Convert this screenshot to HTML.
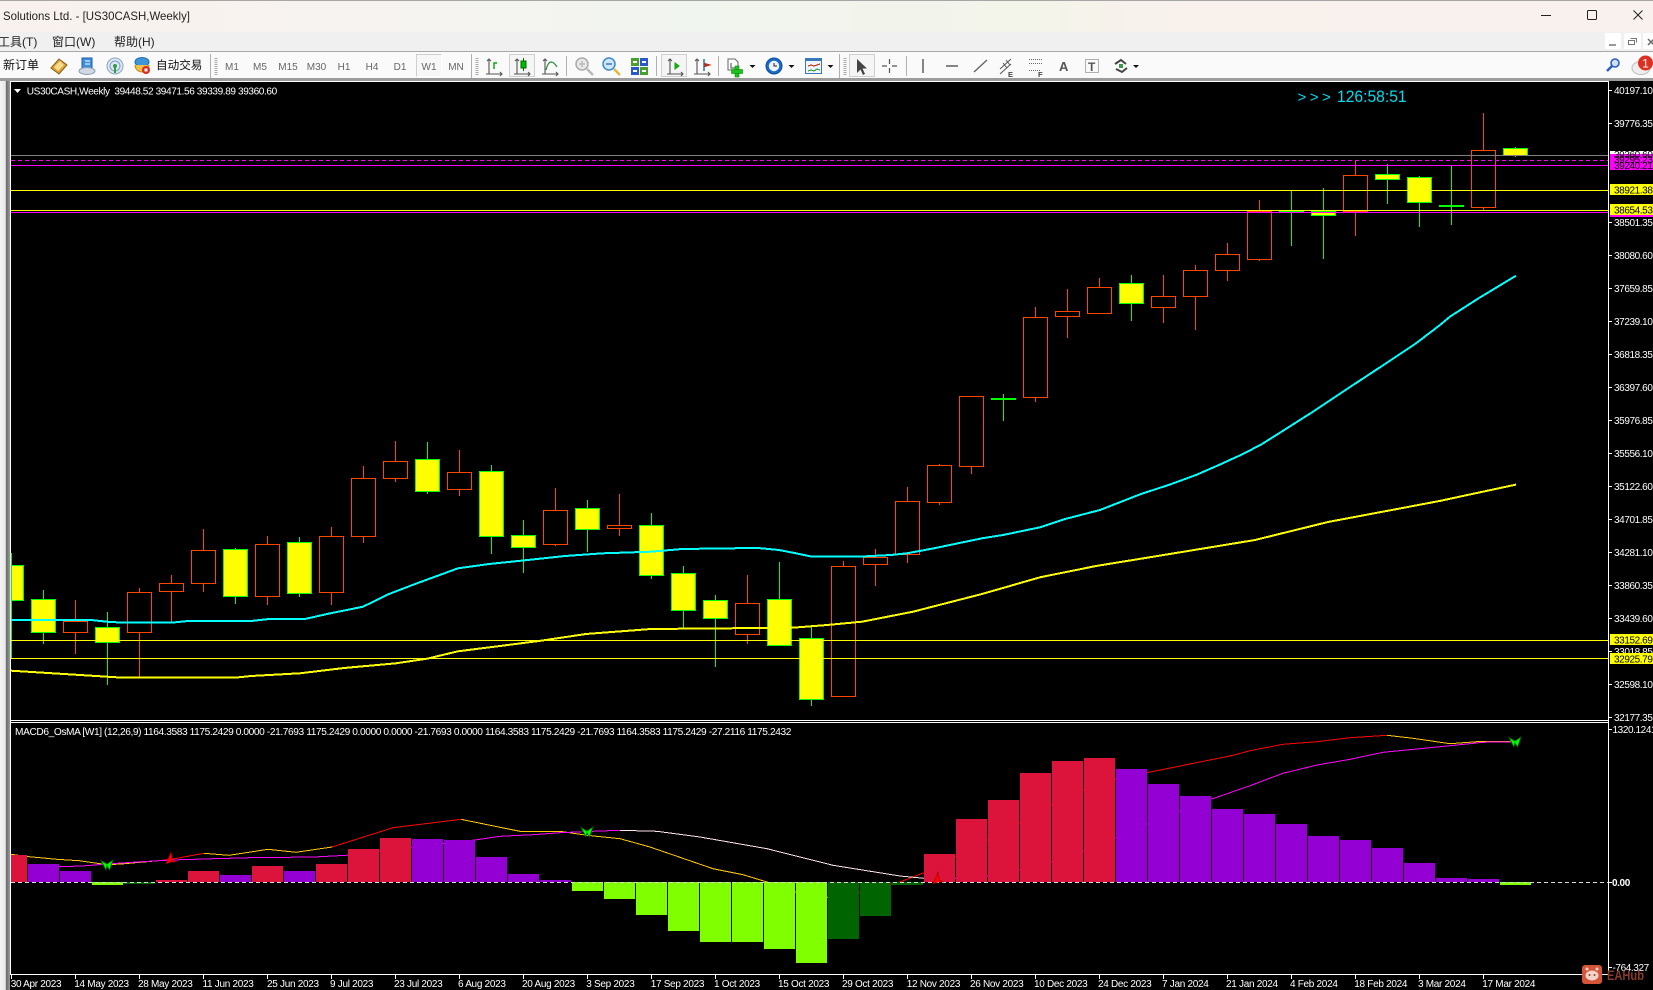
<!DOCTYPE html>
<html><head><meta charset="utf-8"><title>US30CASH,Weekly</title>
<style>
html,body{margin:0;padding:0;background:#000;width:1653px;height:990px;overflow:hidden}
svg{display:block}
text{font-family:"Liberation Sans","Noto Sans CJK SC",sans-serif;white-space:pre}
.a{font-size:10px;letter-spacing:-.4px;fill:#fff}
.k{font-size:10px;letter-spacing:-.4px;fill:#000}
.d{font-size:10px;letter-spacing:-.3px;fill:#fff}
.tf{font-size:10px;fill:#666}
.m{font-size:12px;fill:#222}
.c{shape-rendering:crispEdges}
</style></head><body>
<svg xmlns="http://www.w3.org/2000/svg" width="1653" height="990" viewBox="0 0 1653 990">
<defs>
<linearGradient id="tb" x1="0" x2="1" y1="0" y2="0">
<stop offset="0" stop-color="#f9f1ee"/><stop offset=".2" stop-color="#f7f3f0"/><stop offset=".42" stop-color="#f1f5ef"/><stop offset=".62" stop-color="#f3f4ea"/><stop offset=".72" stop-color="#f9f1ec"/><stop offset="1" stop-color="#f9f1ee"/>
</linearGradient>
<linearGradient id="ls" x1="0" x2="1" y1="0" y2="0"><stop offset="0" stop-color="#f4f4f4"/><stop offset=".55" stop-color="#e8e8e8"/><stop offset=".62" stop-color="#6a6a6a"/><stop offset="1" stop-color="#9a9a9a"/></linearGradient>
<path id="ax" d="M-5-7V8M-8 8H8M-7-5l2-2 2 2M6 6l2 2-2 2" fill="none" stroke="#555" stroke-width="1.100"/>
<path id="ag" d="M-6-4.500L0-1 6-5 2.500 5 0 1-1 5Z" fill="#0f0" stroke="#060" stroke-width=".8"/>
<path id="ar" d="M-5 5L0-7 1.500 1 6 3 0 3Z" fill="#f00" stroke="#900" stroke-width=".6"/>
</defs>

<!-- window chrome -->
<rect width="1653" height="990" fill="#000"/>
<rect width="1653" height="32" fill="url(#tb)"/>
<rect width="1653" height="1" fill="#a6a6a6"/>
<text x="3" y="20" font-size="12" fill="#222" textLength="187" lengthAdjust="spacingAndGlyphs">Solutions Ltd. - [US30CASH,Weekly]</text>
<rect x="1541" y="15" width="10" height="1" fill="#222"/>
<rect x="1587.500" y="10.500" width="9" height="9" rx="1" fill="none" stroke="#222" stroke-width="1"/>
<path d="M1633.500 10.500l9 9m0-9l-9 9" stroke="#222" stroke-width="1" fill="none"/>

<rect y="32" width="1653" height="20" fill="#f0f0f0"/>
<text x="-2" y="46" class="m">工具(T)</text>
<text x="52" y="46" class="m">窗口(W)</text>
<text x="114" y="46" class="m">帮助(H)</text>
<rect x="1605" y="33" width="16" height="16" rx="1" fill="#fff"/><rect x="1609" y="44" width="7" height="2" fill="#999"/>
<rect x="1624" y="33" width="17" height="16" rx="1" fill="#fff"/><path d="M1630.500 38.500h6v4M1628.500 40.500h6v4h-6z" fill="none" stroke="#777"/>
<rect x="1643" y="33" width="12" height="16" rx="1" fill="#fff"/><path d="M1648 39l6 6m0-6l-6 6" stroke="#666" stroke-width="1.500"/>
<rect y="51" width="1653" height="1" fill="#a8a8a8"/>
<rect y="52" width="1653" height="26" fill="#fafafa"/>
<rect y="78" width="1653" height="3" fill="#9c9c9c"/>

<!-- toolbar left -->
<text x="3" y="69" font-size="12" fill="#111">新订单</text>
<g transform="translate(59,66)"><path d="M-8 2L0-7 8-1 0 8Z" fill="#d9a53a" stroke="#8a5c10"/><path d="M-5 1L1-5 5-1-1 5Z" fill="#f6dc8a"/></g>
<g transform="translate(87,66)"><rect x="-5" y="-8" width="10" height="11" fill="#3f8fe0" stroke="#1c5ea8"/><path d="M-2-5h5M-2-2h5" stroke="#fff"/><ellipse cx="0" cy="5" rx="8" ry="3.500" fill="#cfd8e4" stroke="#8a9ab0"/></g>
<g transform="translate(115,66)"><circle r="8" fill="#dfe8f0" stroke="#8aa4c0"/><circle r="5" fill="none" stroke="#7aa0c8"/><circle r="2" fill="#3a9a4a"/><path d="M0 1V7" stroke="#3a9a4a" stroke-width="2"/></g>
<g transform="translate(142,65)"><ellipse cx="0" cy="-3" rx="7" ry="4.500" fill="#3f95d8" stroke="#1d6ba8"/><path d="M-7 0a7 7 0 0 0 14 0" fill="#efc04a" stroke="#b88a20"/><circle cx="4" cy="5" r="4" fill="#e02a18"/><rect x="2.500" y="3.500" width="3" height="3" fill="#fff"/></g>
<text x="156" y="69" font-size="11.600" fill="#111">自动交易</text>
<rect x="210" y="54" width="1" height="24" fill="#b0b0b0"/>
<path d="M216 58V75" stroke="#aaa" stroke-width="3" stroke-dasharray="1 1"/>
<rect x="416.500" y="54.500" width="25" height="22" fill="#f7f7f7" stroke="#cfcfcf"/>
<path d="M441.500 54.500v22h-25" fill="none" stroke="#fff"/>
<g text-anchor="middle">
<text x="232" y="70" class="tf">M1</text><text x="260" y="70" class="tf">M5</text><text x="288" y="70" class="tf">M15</text><text x="316.500" y="70" class="tf">M30</text><text x="344" y="70" class="tf">H1</text><text x="372" y="70" class="tf">H4</text><text x="400" y="70" class="tf">D1</text><text x="429" y="70" class="tf">W1</text><text x="456" y="70" class="tf">MN</text>
</g>
<rect x="471" y="54" width="1" height="24" fill="#b0b0b0"/>
<path d="M477 58V75" stroke="#aaa" stroke-width="3" stroke-dasharray="1 1"/>
<use href="#ax" x="494" y="66"/><path d="M494 69V63h3" fill="none" stroke="#0a0" stroke-width="1.400"/>
<rect x="509.500" y="54.500" width="25" height="22" fill="#f5f5f5" stroke="#cfcfcf"/>
<use href="#ax" x="522" y="66"/><path d="M523.500 58V71" stroke="#060"/><rect x="521" y="61" width="5" height="7" fill="#0b0" stroke="#060"/>
<use href="#ax" x="550" y="66"/><path d="M546 70q2-8 5-8t6 5" fill="none" stroke="#2a8a3a" stroke-width="1.200"/>
<rect x="566" y="56" width="1" height="20" fill="#b0b0b0"/>
<g transform="translate(582,64)"><circle r="6" fill="#e8e8e8" stroke="#aaa" stroke-width="1.500"/><path d="M-3 0h6M0-3v6" stroke="#bbb" stroke-width="1.500"/><path d="M5 5l6 6" stroke="#b8b8b8" stroke-width="2.500"/></g>
<g transform="translate(609,64)"><circle r="6" fill="#cfe6f8" stroke="#3a8ac8" stroke-width="1.500"/><path d="M-3 0h6" stroke="#3a7ab8" stroke-width="1.500"/><path d="M5 5l6 6" stroke="#e0b840" stroke-width="2.500"/></g>
<g class="c"><rect x="631" y="58" width="8" height="8" fill="#4aa02c"/><rect x="640" y="58" width="8" height="8" fill="#2a5ac8"/><rect x="631" y="67" width="8" height="8" fill="#2a5ac8"/><rect x="640" y="67" width="8" height="8" fill="#4aa02c"/><path d="M633 62h4M642 62h4M633 71h4M642 71h4" stroke="#fff" stroke-width="2"/></g>
<rect x="656" y="56" width="1" height="20" fill="#b0b0b0"/>
<rect x="661.500" y="54.500" width="25" height="22" fill="#f5f5f5" stroke="#cfcfcf"/>
<use href="#ax" x="675" y="66"/><path d="M675 63l4 3-4 3Z" fill="#2a2" stroke="#0a0"/>
<use href="#ax" x="702" y="66"/><path d="M704 59V71" stroke="#1a6aa8" stroke-width="1.400"/><path d="M710 65l-5-1.500v3Z" fill="#c02a10" stroke="#c02a10"/>
<rect x="718" y="56" width="1" height="20" fill="#b0b0b0"/>
<g transform="translate(734,66)"><path d="M-6-7H1l3 3V4H-6Z" fill="#fff" stroke="#666"/><path d="M-3-3v5h5" fill="none" stroke="#444"/><rect x="1" y="0" width="4" height="11" fill="#1cc21c" stroke="#0a8a0a" stroke-width=".6"/><rect x="-2.500" y="3.500" width="11" height="4" fill="#1cc21c" stroke="#0a8a0a" stroke-width=".6"/></g>
<path d="M749.500 69h6l-3 3Z" fill="#111" transform="translate(0,-4)"/>
<g transform="translate(774,66)"><circle r="8" fill="#1a6cc8" stroke="#0e4c98"/><circle r="5.200" fill="#eef4fa"/><path d="M0-3V0H3" stroke="#222" fill="none"/></g>
<path d="M788.500 65h6l-3 3Z" fill="#111"/>
<g class="c" transform="translate(805,58)"><rect x=".500" y=".500" width="16" height="15" fill="#eef4fa" stroke="#3a78b8"/><rect x="1" y="1" width="15" height="2" fill="#3a78b8"/><path d="M3 8l3-1 3 1 3-1 3-1" stroke="#c02a10" fill="none"/><path d="M3 13l3-1 3 1 3-2 3 1" stroke="#2a9a3a" fill="none"/></g>
<path d="M827.500 65h6l-3 3Z" fill="#111"/>
<rect x="839" y="54" width="1" height="24" fill="#b0b0b0"/>
<path d="M845 58V75" stroke="#aaa" stroke-width="3" stroke-dasharray="1 1"/>
<rect x="849.500" y="54.500" width="25" height="22" fill="#f5f5f5" stroke="#cfcfcf"/>
<path d="M857 59V73L860.500 69.500 863 75 865 74 862.500 68.500H867Z" fill="#444"/>
<path d="M889.500 59v5m0 4v5M882 66h5m5 0h5" stroke="#555" stroke-width="1.200" fill="none"/>
<rect x="906" y="56" width="1" height="20" fill="#b0b0b0"/>
<path d="M923 59V73" stroke="#555" stroke-width="1.400"/>
<path d="M946 66H958" stroke="#555" stroke-width="1.400"/>
<path d="M974 72L987 60" stroke="#666" stroke-width="1.400"/>
<g stroke="#555" fill="none"><path d="M1000 69l11-10M1000 74l11-10M1003 63l4 5M1006 60l4 5"/></g><text x="1008" y="77" font-size="7.500" font-weight="bold" fill="#444">E</text>
<path d="M1029 59.500h13M1029 63.500h13M1029 70.500h11" stroke="#666" stroke-dasharray="1 1"/><text x="1038" y="77" font-size="7.500" font-weight="bold" fill="#444">F</text>
<text x="1059" y="71" font-size="13" font-weight="bold" fill="#555">A</text>
<rect x="1085.500" y="59.500" width="13" height="13" fill="none" stroke="#666" stroke-dasharray="1 1"/><text x="1088" y="71" font-size="12" font-weight="bold" fill="#555">T</text>
<g transform="translate(1121,66)"><path d="M-6-2L0-6 5-2M-5 3L1 6 6 2" fill="none" stroke="#444" stroke-width="2"/><rect x="-2" y="-2" width="4" height="4" fill="#3a9a4a"/></g>
<path d="M1133 65h6l-3 3Z" fill="#111"/>
<g transform="translate(1613,65)"><circle cx="2" cy="-2" r="4" fill="#cfe0f5" stroke="#2a5ec0" stroke-width="1.600"/><path d="M-1 1l-5 5" stroke="#2a5ec0" stroke-width="2.500"/></g>
<ellipse cx="1641" cy="68" rx="9" ry="6.500" fill="#eee" stroke="#bbb"/>
<circle cx="1645.500" cy="63" r="7.500" fill="#de3020"/><text x="1645.500" y="67.500" font-size="12" fill="#fff" text-anchor="middle">1</text>

<!-- left strip -->
<rect x="0" y="81" width="10" height="909" fill="url(#ls)"/>

<!-- chart frame -->
<g class="c" fill="#fff">
<rect x="10" y="81" width="1599" height="1"/>
<rect x="10" y="81" width="1" height="894"/>
<rect x="1608" y="81" width="1" height="894"/>
<rect x="10" y="720" width="1599" height="1"/>
<rect x="10" y="722" width="1599" height="1"/>
<rect x="10" y="974" width="1599" height="1"/>
</g>

<!-- wicks -->
<g class="c" fill="none" stroke-width="1">
<path stroke="#ff4500" d="M75.500 600V654M139.500 588V678M171.500 575V622M203.500 529V592M267.500 536V605M331.500 527V605M363.500 466V543M395.500 441V482M459.500 450V496M555.500 488V546M619.500 494V536M747.500 575V644M843.500 561V696M875.500 549V586M907.500 487V563M939.500 464V505M971.500 396V474M1035.500 307V402M1067.500 289V338M1099.500 278V314M1163.500 275V323M1195.500 265V330M1227.500 243V281M1259.500 200V261M1355.500 160V236M1483.500 113V210"/>
<path stroke="#0f0" d="M11.500 553V658M43.500 590V644M107.500 612V685M235.500 548V604M299.500 537V597M427.500 442V494M491.500 465V554M523.500 520V573M587.500 500V552M651.500 513V579M683.500 566V629M715.500 595V667M779.500 562V645M811.500 627V706M1003.500 394V421M1131.500 275V321M1291.500 191V246M1323.500 188V259M1387.500 164V204M1419.500 176V227M1451.500 166V225M1515.500 147V157"/>
</g>
<!-- bear bodies (yellow) -->
<g class="c" fill="#ff0" stroke="#0f0" stroke-width="1">
<rect x="11.500" y="565.500" width="12" height="35"/>
<rect x="31.500" y="599.500" width="24" height="33"/>
<rect x="95.500" y="627.500" width="24" height="15"/>
<rect x="223.500" y="549.500" width="24" height="47"/>
<rect x="287.500" y="542.500" width="24" height="51"/>
<rect x="415.500" y="459.500" width="24" height="32"/>
<rect x="479.500" y="471.500" width="24" height="65"/>
<rect x="511.500" y="535.500" width="24" height="12"/>
<rect x="575.500" y="508.500" width="24" height="21"/>
<rect x="639.500" y="525.500" width="24" height="50"/>
<rect x="671.500" y="573.500" width="24" height="37"/>
<rect x="703.500" y="600.500" width="24" height="18"/>
<rect x="767.500" y="599.500" width="24" height="46"/>
<rect x="799.500" y="638.500" width="24" height="61"/>
<rect x="1119.500" y="283.500" width="24" height="20"/>
<rect x="1311.500" y="211.500" width="24" height="4"/>
<rect x="1375.500" y="174.500" width="24" height="5"/>
<rect x="1407.500" y="177.500" width="24" height="25"/>
<rect x="1503.500" y="148.500" width="24" height="7"/>
</g>
<g class="c" fill="#0f0"><rect x="991" y="398" width="25" height="2"/><rect x="1279" y="210" width="25" height="2"/><rect x="1439" y="205" width="25" height="2"/></g>
<!-- bull bodies (black) -->
<g class="c" fill="#000" stroke="#ff4500" stroke-width="1">
<rect x="63.500" y="621.500" width="24" height="11"/>
<rect x="127.500" y="592.500" width="24" height="40"/>
<rect x="159.500" y="583.500" width="24" height="8"/>
<rect x="191.500" y="550.500" width="24" height="33"/>
<rect x="255.500" y="544.500" width="24" height="52"/>
<rect x="319.500" y="536.500" width="24" height="56"/>
<rect x="351.500" y="478.500" width="24" height="58"/>
<rect x="383.500" y="461.500" width="24" height="17"/>
<rect x="447.500" y="472.500" width="24" height="17"/>
<rect x="543.500" y="510.500" width="24" height="34"/>
<rect x="607.500" y="525.500" width="24" height="3"/>
<rect x="735.500" y="603.500" width="24" height="31"/>
<rect x="831.500" y="566.500" width="24" height="130"/>
<rect x="863.500" y="557.500" width="24" height="7"/>
<rect x="895.500" y="501.500" width="24" height="53"/>
<rect x="927.500" y="465.500" width="24" height="37"/>
<rect x="959.500" y="396.500" width="24" height="70"/>
<rect x="1023.500" y="317.500" width="24" height="80"/>
<rect x="1055.500" y="311.500" width="24" height="5"/>
<rect x="1087.500" y="287.500" width="24" height="26"/>
<rect x="1151.500" y="296.500" width="24" height="11"/>
<rect x="1183.500" y="270.500" width="24" height="26"/>
<rect x="1215.500" y="254.500" width="24" height="16"/>
<rect x="1247.500" y="211.500" width="24" height="48"/>
<rect x="1343.500" y="175.500" width="24" height="36"/>
<rect x="1471.500" y="150.500" width="24" height="57"/>
</g>

<!-- horizontal lines -->
<g class="c" fill="none" stroke-width="1">
<path stroke="#808080" d="M11 155.500H1608"/>
<path stroke="#f0f" stroke-dasharray="4 3" d="M11 160.500H1608"/>
<path stroke="#f0f" d="M11 165.500H1608"/>
<path stroke="#ff0" d="M11 190.500H1608"/>
<path stroke="#ff0" d="M11 210.500H1608"/>
<path stroke="#f0f" d="M11 212.500H1608"/>
<path stroke="#ff0" d="M11 640.500H1608"/>
<path stroke="#ff0" d="M11 658.500H1608"/>
</g>

<!-- moving averages -->
<polyline class="c" fill="none" stroke="#0ff" stroke-width="2" points="11,620 91,620 107,621.700 123,622.700 171,622.700 188,621 251,621 269,619 305,619 327,614 363,606.700 389,594 417,583.300 458,568.300 489,564 523,560.500 565,556 603,553.300 651,551.700 682,549 731,548.300 758,548 779,550 796,553.300 812,556.700 858,556.700 891,555 907,553.300 934,548.300 982,538.300 1003,535 1040,527.300 1064,519.300 1100,510 1141,494 1170,484.500 1196,475 1220,464.500 1244,453.500 1262,444 1279,433.300 1313,411.700 1348,388.300 1382,366 1416,343.300 1440,325 1450,316.600 1480,297.400 1516,275.700"/>
<polyline class="c" fill="none" stroke="#ff0" stroke-width="2" points="11,670.700 27,671.700 59,673.700 91,675.700 107,676.700 123,677.700 235,677.700 251,676 300,673.300 344,668 396,663.300 427,658.700 458,651.300 500,646 541,640.700 586,634 651,629 793,627.700 827,625 862,621.700 913,611.700 982,594 1040,577.300 1096,566 1160,555.600 1255,540 1328,522 1413,506 1440,500.900 1516,484.600"/>

<!-- chart labels -->
<path d="M14 89h7l-3.500 4Z" fill="#fff"/>
<text x="26.800" y="94.500" class="a" textLength="250" lengthAdjust="spacingAndGlyphs">US30CASH,Weekly  39448.52 39471.56 39339.89 39360.60</text>
<text x="1297.500" y="102" font-size="15" fill="#00dcf0">&gt;</text>
<text x="1309.800" y="102" font-size="15" fill="#00dcf0">&gt;</text>
<text x="1322" y="102" font-size="15" fill="#00dcf0">&gt;</text>
<text x="1337" y="102" font-size="17" fill="#00dcf0" textLength="69.600" lengthAdjust="spacingAndGlyphs">126:58:51</text>

<!-- right axis -->
<path class="c" stroke="#fff" d="M1609 90.500h3M1609 123.500h3M1609 222.500h3M1609 255.500h3M1609 288.500h3M1609 321.500h3M1609 354.500h3M1609 387.500h3M1609 420.500h3M1609 453.500h3M1609 486.500h3M1609 519.500h3M1609 552.500h3M1609 585.500h3M1609 618.500h3M1609 651.500h3M1609 684.500h3M1609 717.500h3M1609 729.500h3M1609 882.500h3M1609 967.500h3"/>
<g>
<text x="1614" y="94" class="a">40197.10</text>
<text x="1614" y="127" class="a">39776.35</text>
<text x="1614" y="226" class="a">38501.35</text>
<text x="1614" y="259" class="a">38080.60</text>
<text x="1614" y="292" class="a">37659.85</text>
<text x="1614" y="325" class="a">37239.10</text>
<text x="1614" y="358" class="a">36818.35</text>
<text x="1614" y="391" class="a">36397.60</text>
<text x="1614" y="424" class="a">35976.85</text>
<text x="1614" y="457" class="a">35556.10</text>
<text x="1614" y="490" class="a">35122.60</text>
<text x="1614" y="523" class="a">34701.85</text>
<text x="1614" y="556" class="a">34281.10</text>
<text x="1614" y="589" class="a">33860.35</text>
<text x="1614" y="622" class="a">33439.60</text>
<text x="1614" y="655" class="a">33018.85</text>
<text x="1614" y="688" class="a">32598.10</text>
<text x="1614" y="721" class="a">32177.35</text>
</g>
<g class="c">
<rect x="1610" y="151" width="43" height="11" fill="#fff"/>
<rect x="1610" y="160" width="43" height="10" fill="#f0f"/>
<rect x="1610" y="154" width="43" height="11" fill="#f0f"/>
<rect x="1610" y="184" width="43" height="11" fill="#ff0"/>
<rect x="1610" y="215" width="43" height="2" fill="#f0f"/>
<rect x="1610" y="204" width="43" height="11" fill="#ff0"/>
<rect x="1610" y="634" width="43" height="11" fill="#ff0"/>
<rect x="1610" y="653" width="43" height="11" fill="#ff0"/>
</g>
<text x="1614" y="158" class="k">39360.60</text>
<text x="1614" y="169" class="k">39240.21</text>
<text x="1614" y="163" class="k">39295.23</text>
<text x="1614" y="193.500" class="k">38921.38</text>
<text x="1614" y="213.500" class="k">38654.53</text>
<text x="1614" y="643.500" class="k">33152.69</text>
<text x="1614" y="662.500" class="k">32925.79</text>

<!-- MACD lines -->
<g fill="none" stroke-width="1" class="c">
<polyline stroke="#ffc800" points="11,854.300 29,856.700 57,859.300 79,860.700 107,864.700 121,864 155,861"/>
<polyline stroke="#f00" points="155,861 171,859.300 204,853.300"/>
<polyline stroke="#ffc800" points="204,853.300 229,855.300 268,849.300 296,852.300 332,847"/>
<polyline stroke="#f00" points="332,847 393,827.700 461,819.300"/>
<polyline stroke="#ffc800" points="461,819.300 500,827.300 520,831.300 560,831.300 587,835.300 620,838.700 650,847 713,868.700 743,874.700 767,882 795,892 828,897.300"/>
<polyline stroke="#f00" points="828,897.300 860,892.300 900,882 924,872.700 956,856 987,840.300 1019,823 1051,805.300 1083,790.300 1115,779.300 1147,772.700 1233,755.300 1250,750.700 1283,744.300 1317,741.700 1350,737.700 1387,735.300"/>
<polyline stroke="#ffc800" points="1387,735.300 1413,738.300 1450,743.700 1477,741.700 1515,741.300"/>
<polyline stroke="#f0f" points="28,868 59,866.700 82,866 107,864 132,862.300 171,860 214,858.700 250,857.700 314,857 346,855.300 411,847.300 475,840 500,836.300 533,834.700 560,832.700 600,831 620,830.300"/>
<polyline stroke="#ffe4e8" points="620,830.300 657,831.300 700,837 767,848.700 833,865.300 900,876 924,878.300 955,878.300"/>
<polyline stroke="#f0f" points="955,878.300 987,876.300 1019,870.300 1051,862.300 1083,851.300 1115,838.300 1147,824.300 1179,811.300 1211,799.300 1250,785.700 1283,773.300 1317,765 1350,759.300 1383,752.300 1417,749 1450,745.700 1483,742.300 1515,741.700"/>
</g>

<!-- histogram -->
<g class="c" fill="#dc143c">
<rect x="11" y="855" width="16" height="27"/><rect x="156" y="880" width="31" height="2"/><rect x="188" y="871" width="31" height="11"/><rect x="252" y="866" width="31" height="16"/><rect x="316" y="864" width="31" height="18"/><rect x="348" y="849" width="31" height="33"/><rect x="380" y="838" width="31" height="44"/><rect x="924" y="854" width="31" height="28"/><rect x="956" y="819" width="31" height="63"/><rect x="988" y="800" width="31" height="82"/><rect x="1020" y="773" width="31" height="109"/><rect x="1052" y="761" width="31" height="121"/><rect x="1084" y="758" width="31" height="124"/>
</g>
<g class="c" fill="#9400d3">
<rect x="28" y="864" width="31" height="18"/><rect x="60" y="871" width="31" height="11"/><rect x="220" y="875" width="31" height="7"/><rect x="284" y="871" width="31" height="11"/><rect x="412" y="839" width="31" height="43"/><rect x="444" y="840" width="31" height="42"/><rect x="476" y="857" width="31" height="25"/><rect x="508" y="874" width="31" height="8"/><rect x="540" y="880" width="31" height="2"/><rect x="1116" y="769" width="31" height="113"/><rect x="1148" y="784" width="31" height="98"/><rect x="1180" y="796" width="31" height="86"/><rect x="1212" y="809" width="31" height="73"/><rect x="1244" y="814" width="31" height="68"/><rect x="1276" y="824" width="31" height="58"/><rect x="1308" y="836" width="31" height="46"/><rect x="1340" y="840" width="31" height="42"/><rect x="1372" y="848" width="31" height="34"/><rect x="1404" y="863" width="31" height="19"/><rect x="1436" y="878" width="31" height="4"/><rect x="1468" y="879" width="31" height="3"/>
</g>
<g class="c" fill="#7fff00">
<rect x="92" y="882" width="31" height="3"/><rect x="572" y="882" width="31" height="9"/><rect x="604" y="882" width="31" height="17"/><rect x="636" y="882" width="31" height="33"/><rect x="668" y="882" width="31" height="49"/><rect x="700" y="882" width="31" height="60"/><rect x="732" y="882" width="31" height="60"/><rect x="764" y="882" width="31" height="67"/><rect x="796" y="882" width="31" height="81"/><rect x="1500" y="882" width="31" height="3"/>
</g>
<g class="c" fill="#006400">
<rect x="124" y="882" width="31" height="2"/><rect x="828" y="882" width="31" height="57"/><rect x="860" y="882" width="31" height="34"/><rect x="892" y="882" width="31" height="3"/>
</g>
<path class="c" d="M11 882.500H1608" stroke="#d8d8d8" stroke-dasharray="4 3"/>

<!-- arrows -->
<use href="#ag" x="107" y="865"/>
<use href="#ag" x="587" y="832"/>
<use href="#ag" x="1515" y="742"/>
<use href="#ar" x="171" y="859"/>
<use href="#ar" x="938" y="879"/>

<text x="15" y="735" class="a" textLength="776" lengthAdjust="spacingAndGlyphs">MACD6_OsMA [W1] (12,26,9) 1164.3583 1175.2429 0.0000 -21.7693 1175.2429 0.0000 0.0000 -21.7693 0.0000 1164.3583 1175.2429 -21.7693 1164.3583 1175.2429 -27.2116 1175.2432</text>
<text x="1612.500" y="733" class="a">1320.1241</text>
<text x="1612" y="886" class="a" font-weight="bold">0.00</text>
<text x="1612.500" y="971" class="a">-764.327</text>

<!-- date axis -->
<path class="c" stroke="#fff" d="M11.500 975v4M75.500 975v4M139.500 975v4M203.500 975v4M267.500 975v4M331.500 975v4M395.500 975v4M459.500 975v4M523.500 975v4M587.500 975v4M651.500 975v4M715.500 975v4M779.500 975v4M843.500 975v4M907.500 975v4M971.500 975v4M1035.500 975v4M1099.500 975v4M1163.500 975v4M1227.500 975v4M1291.500 975v4M1355.500 975v4M1419.500 975v4M1483.500 975v4"/>
<g>
<text x="10.700" y="987" class="d">30 Apr 2023</text>
<text x="74.300" y="987" class="d">14 May 2023</text>
<text x="138" y="987" class="d">28 May 2023</text>
<text x="202.500" y="987" class="d">11 Jun 2023</text>
<text x="267" y="987" class="d">25 Jun 2023</text>
<text x="330" y="987" class="d">9 Jul 2023</text>
<text x="394" y="987" class="d">23 Jul 2023</text>
<text x="458" y="987" class="d">6 Aug 2023</text>
<text x="522" y="987" class="d">20 Aug 2023</text>
<text x="586.300" y="987" class="d">3 Sep 2023</text>
<text x="650.700" y="987" class="d">17 Sep 2023</text>
<text x="714" y="987" class="d">1 Oct 2023</text>
<text x="778" y="987" class="d">15 Oct 2023</text>
<text x="842" y="987" class="d">29 Oct 2023</text>
<text x="906.700" y="987" class="d">12 Nov 2023</text>
<text x="970" y="987" class="d">26 Nov 2023</text>
<text x="1034" y="987" class="d">10 Dec 2023</text>
<text x="1098" y="987" class="d">24 Dec 2023</text>
<text x="1162" y="987" class="d">7 Jan 2024</text>
<text x="1226" y="987" class="d">21 Jan 2024</text>
<text x="1290" y="987" class="d">4 Feb 2024</text>
<text x="1354.300" y="987" class="d">18 Feb 2024</text>
<text x="1418" y="987" class="d">3 Mar 2024</text>
<text x="1482.300" y="987" class="d">17 Mar 2024</text>
</g>

<!-- watermark -->
<rect x="1582" y="965" width="20" height="19" rx="3" fill="#d4553a"/>
<ellipse cx="1592" cy="975.500" rx="6.500" ry="5" fill="#f0d4cc"/>
<circle cx="1587" cy="969" r="1.500" fill="#f0d4cc"/><circle cx="1597" cy="969" r="1.500" fill="#f0d4cc"/>
<circle cx="1589.500" cy="975" r="1" fill="#a03a26"/><circle cx="1594.500" cy="975" r="1" fill="#a03a26"/>
<text x="1607" y="980" font-size="14" font-weight="bold" fill="#8a3a28" textLength="37" lengthAdjust="spacingAndGlyphs">EAHub</text>
</svg>
</body></html>
